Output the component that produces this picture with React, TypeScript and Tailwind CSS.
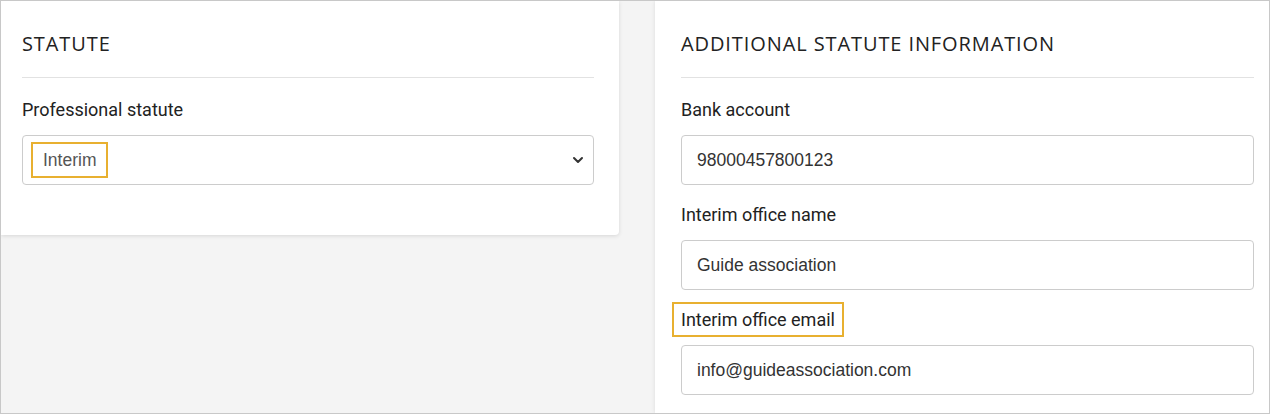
import { ChevronDown } from "lucide-react";

const heading = "text-[20px] font-medium tracking-[0.045em] text-[#222] font-['Open_Sans',sans-serif]";
const label = "text-[18px] leading-[22px] font-normal text-[#222] font-['Roboto',sans-serif]";
const field =
  "h-[50px] rounded-[4px] border border-[#cccccc] bg-white flex items-center px-[15px] text-[17.5px] text-[#333] font-['Liberation_Sans',Arial,sans-serif]";

function Field({ name, value, mark }: { name: string; value: string; mark?: boolean }) {
  return (
    <div className="flex flex-col">
      <div className="pt-[19px] h-[55px] flex items-start">
        <span
          className={
            mark
              ? `${label} -ml-[9px] -mt-[7px] px-[7px] py-[4px] leading-[23px] border-2 border-[#e8b030]`
              : label
          }
        >
          {name}
        </span>
      </div>
      <div className={field}>{value}</div>
    </div>
  );
}

export default function App() {
  return (
    <div className="w-[1270px] h-[414px] overflow-hidden bg-[#f4f4f4] border border-[#c8c8c8] flex gap-[36px] items-start">
      {/* Statute */}
      <div className="w-[618px] bg-white shadow-[0_1px_4px_rgba(0,0,0,0.12)] rounded-br-[4px] pl-[21px] pr-[25px] pb-[50px]">
        <div className="h-[77px] pt-[10px] flex items-center border-b border-[#e2e2e2]">
          <h2 className={heading}>STATUTE</h2>
        </div>
        <div className="flex pt-[21px] pb-[14px]">
          <span className={label}>Professional statute</span>
        </div>
        <div className={`${field} justify-between pl-[8px] pr-[7px]`}>
          <span className="border-2 border-[#e8b030] px-[10px] py-[3px] text-[#555]">Interim</span>
          <ChevronDown className="w-[16px] h-[16px] text-[#333]" strokeWidth={3} />
        </div>
      </div>

      {/* Additional */}
      <div className="flex-1 self-stretch bg-white shadow-[0_0_4px_rgba(0,0,0,0.1)] pl-[26px] pr-[15px]">
        <div className="h-[77px] pt-[10px] flex items-center border-b border-[#e2e2e2]">
          <h2 className={heading}>ADDITIONAL STATUTE INFORMATION</h2>
        </div>
        <div className="flex pt-[21px] pb-[14px]">
          <span className={label}>Bank account</span>
        </div>
        <div className={field}>98000457800123</div>
        <Field name="Interim office name" value="Guide association" />
        <Field name="Interim office email" value="info@guideassociation.com" mark />
      </div>
    </div>
  );
}
